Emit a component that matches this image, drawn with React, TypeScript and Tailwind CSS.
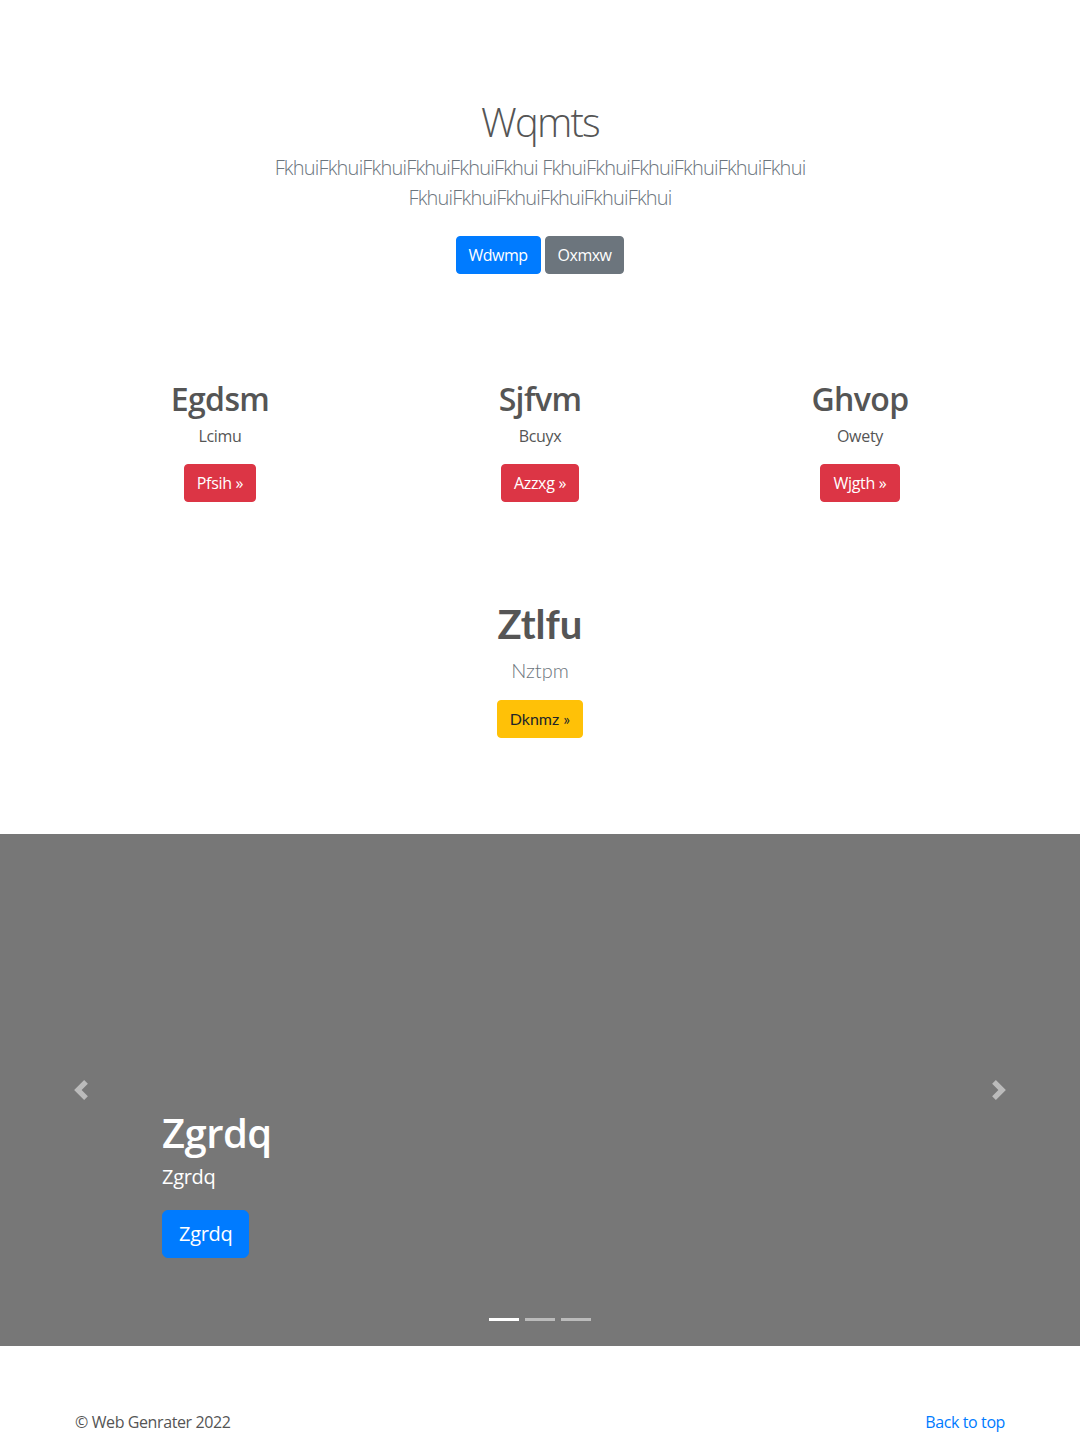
import React from "react";

const sans = { fontFamily: '"Open Sans", "Noto Sans", sans-serif' };
const lato = { fontFamily: 'Lato, "Open Sans", sans-serif' };

function Chevron({ dir }: { dir: "left" | "right" }) {
  return (
    <svg width="20" height="20" viewBox="0 0 8 8" fill="#fff" className="opacity-50">
      {dir === "left" ? (
        <path d="M5.25 0l-4 4 4 4 1.5-1.5L4.25 4l2.5-2.5L5.25 0z" />
      ) : (
        <path d="M2.75 0l-1.5 1.5L3.75 4l-2.5 2.5L2.75 8l4-4-4-4z" />
      )}
    </svg>
  );
}

export default function App() {
  const cols = [
    { t: "Egdsm", s: "Lcimu", b: "Pfsih" },
    { t: "Sjfvm", s: "Bcuyx", b: "Azzxg" },
    { t: "Ghvop", s: "Owety", b: "Wjgth" },
  ];
  return (
    <div className="bg-white text-[#555] w-full" style={sans}>
      {/* Hero */}
      <section className="pt-[98px] text-center">
        <h1 className="text-[40px] leading-[48px] font-light tracking-[-1.8px] text-[#555]">Wqmts</h1>
        <p className="mx-auto mt-[7px] max-w-[610px] text-[20px] leading-[30px] font-light tracking-[-0.8px] text-[#6c757d]">
          FkhuiFkhuiFkhuiFkhuiFkhuiFkhui FkhuiFkhuiFkhuiFkhuiFkhuiFkhui FkhuiFkhuiFkhuiFkhuiFkhuiFkhui
        </p>
        <div className="mt-[23px] flex justify-center gap-[4px]">
          <a className="inline-block rounded-[4px] border border-[#007bff] bg-[#007bff] px-[12px] py-[6px] text-[16px] leading-[24px] tracking-[-0.5px] text-white">
            Wdwmp
          </a>
          <a className="inline-block rounded-[4px] border border-[#6c757d] bg-[#6c757d] px-[12px] py-[6px] text-[16px] leading-[24px] tracking-[-0.5px] text-white">
            Oxmxw
          </a>
        </div>
      </section>

      {/* Columns */}
      <section className="mx-auto mt-[106px] grid w-[960px] grid-cols-3 text-center">
        {cols.map((c) => (
          <div key={c.t} className="flex flex-col items-center px-[15px]">
            <h2 className="text-[32px] leading-[38px] font-semibold tracking-[-0.6px] text-[#555]">{c.t}</h2>
            <p className="mt-[6px] text-[16px] leading-[24px] tracking-[-0.3px] text-[#555]">{c.s}</p>
            <a className="mt-[16px] inline-block rounded-[4px] border border-[#dc3545] bg-[#dc3545] px-[12px] py-[6px] text-[16px] leading-[24px] tracking-[-0.3px] text-white">
              {c.b} »
            </a>
          </div>
        ))}
      </section>

      {/* Ztlfu */}
      <section className="mt-[98px] flex flex-col items-center text-center" style={lato}>
        <h1 className="text-[40px] leading-[48px] font-bold text-[#555]">Ztlfu</h1>
        <p className="mt-[7px] text-[20px] leading-[30px] font-light text-[#6c757d]">Nztpm</p>
        <a className="mt-[15px] inline-block rounded-[4px] border border-[#ffc107] bg-[#ffc107] px-[12px] py-[6px] text-[16px] leading-[24px] text-[#212529]">
          Dknmz »
        </a>
      </section>

      {/* Carousel */}
      <section className="relative mt-[96px] h-[512px] w-full bg-[#777]">
        <div className="absolute inset-y-0 left-0 flex w-[15%] items-center justify-center">
          <Chevron dir="left" />
        </div>
        <div className="absolute inset-y-0 right-0 flex w-[15%] items-center justify-center">
          <Chevron dir="right" />
        </div>
        <div className="absolute bottom-[88px] left-[15%] right-[15%] text-left text-white">
          <h1 className="text-[40px] leading-[48px] font-semibold tracking-[-0.5px]">Zgrdq</h1>
          <p className="mt-[5px] text-[20px] leading-[30px] tracking-[-0.3px]">Zgrdq</p>
          <a className="mt-[18px] inline-block rounded-[6px] border border-[#007bff] bg-[#007bff] px-[16px] py-[8px] text-[20px] leading-[30px] tracking-[-0.3px] text-white">
            Zgrdq
          </a>
        </div>
        <div className="absolute bottom-[25px] left-0 right-0 flex justify-center gap-[6px]">
          <span className="h-[3px] w-[30px] bg-white" />
          <span className="h-[3px] w-[30px] bg-white opacity-50" />
          <span className="h-[3px] w-[30px] bg-white opacity-50" />
        </div>
      </section>

      {/* Footer */}
      <footer className="mx-auto flex w-[960px] justify-between px-[15px] pb-[48px] pt-[64px] text-[16px] leading-[24px] tracking-[-0.4px]">
        <p className="text-[#555]">© Web Genrater 2022</p>
        <a className="text-[#007bff]">Back to top</a>
      </footer>
    </div>
  );
}
